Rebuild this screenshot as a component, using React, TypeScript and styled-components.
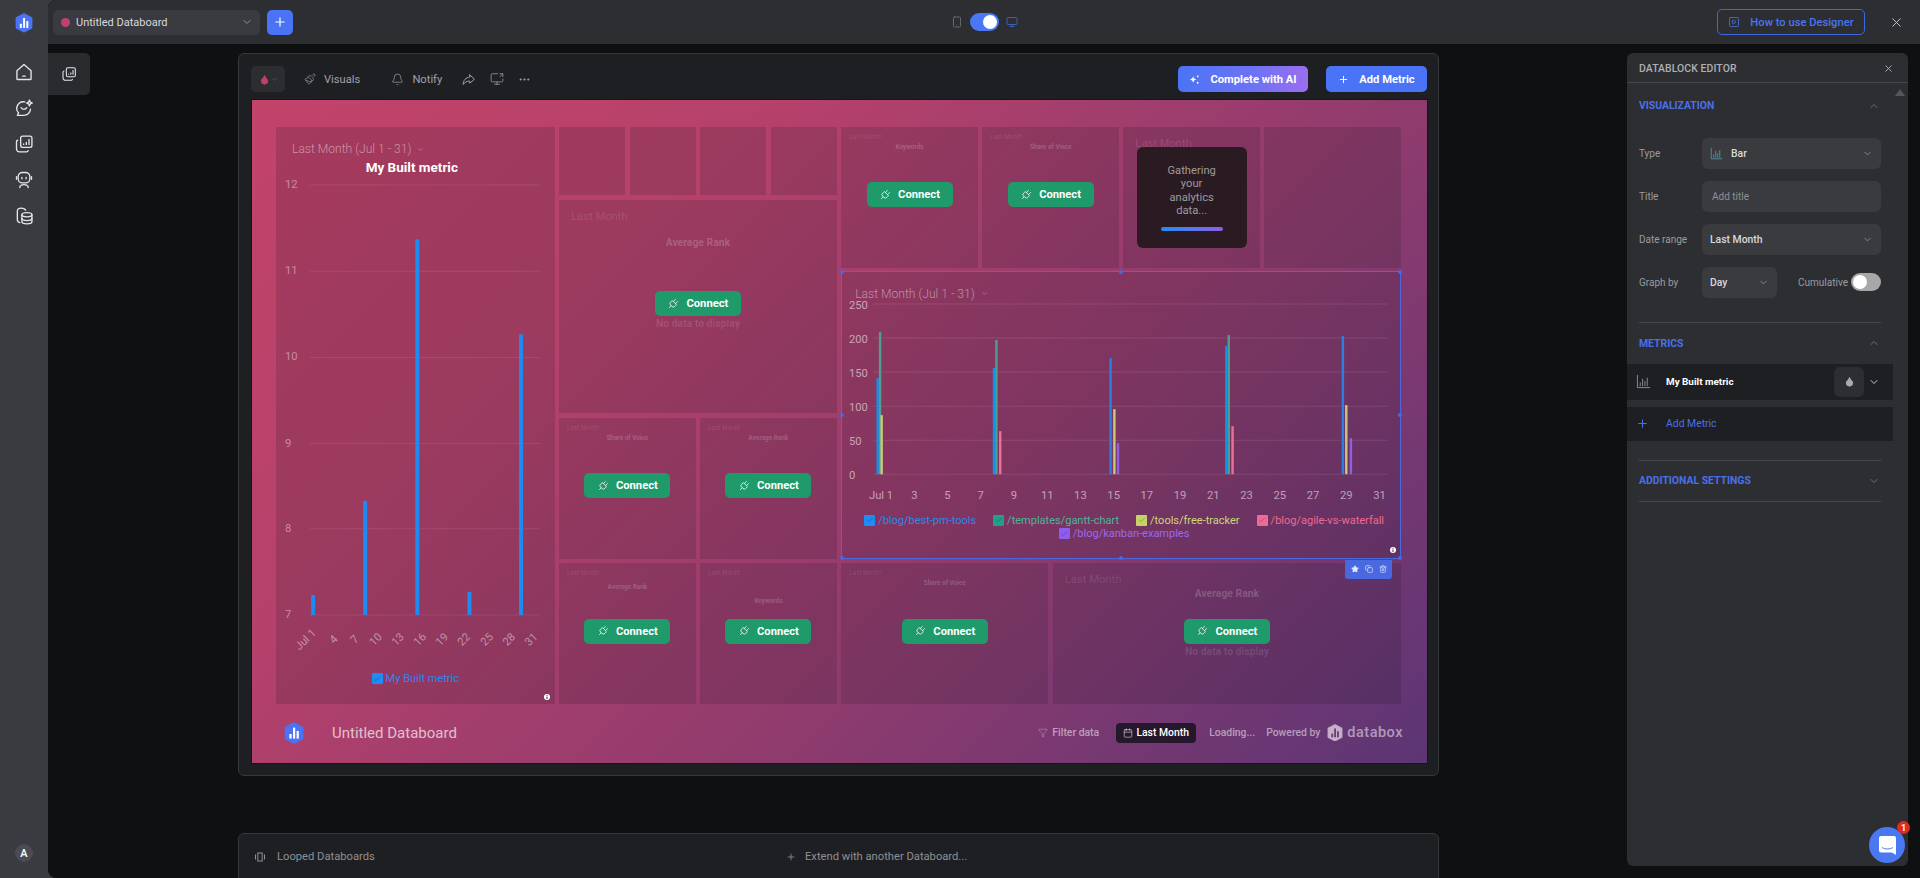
import React from 'react';
import styled, { createGlobalStyle } from 'styled-components';
import {
  Bell,
  Calendar,
  Check,
  ChevronDown,
  ChevronUp,
  Copy,
  Droplet,
  Filter,
  Monitor,
  MoreHorizontal,
  Paintbrush,
  Plug as PlugIcon,
  Plus,
  ScreenShare,
  Smartphone,
  SquarePlay,
  Star,
  Trash2,
  X,
} from 'lucide-react';

const Global = createGlobalStyle`
  html, body { margin: 0; padding: 0; height: 100%; background: #0f1012; }
  body { font-family: Roboto, "Liberation Sans", sans-serif; overflow: hidden; }
  * { box-sizing: border-box; }
`;

const Shell = styled.div`
  display: flex;
  width: 1920px;
  height: 878px;
  background: #3a3b41;
  overflow: hidden;
`;

const Nav = styled.nav`
  width: 48px;
  flex: none;
  display: flex;
  flex-direction: column;
  align-items: center;
  padding: 13px 0 16px;
`;

const NavLogo = styled.div`
  height: 22px;
  margin-bottom: 25px;
`;

const NavButton = styled.div`
  width: 24px;
  height: 24px;
  margin-bottom: 12px;
  display: flex;
  align-items: center;
  justify-content: center;
  color: #e6e6ea;
`;

const Avatar = styled.div`
  margin-top: auto;
  width: 18px;
  height: 18px;
  border-radius: 50%;
  background: #4b4c53;
  color: #fff;
  font-size: 11px;
  font-weight: 500;
  display: flex;
  align-items: center;
  justify-content: center;
`;

const Main = styled.div`
  flex: 1;
  min-width: 0;
  display: flex;
  flex-direction: column;
  background: #0f1012;
  border-radius: 8px 0 0 8px;
  overflow: hidden;
`;

const TopBar = styled.header`
  height: 44px;
  flex: none;
  display: grid;
  grid-template-columns: 1fr auto 1fr;
  align-items: center;
  padding: 0 5px;
  background: #2d2e32;
`;

const TopLeft = styled.div`
  display: flex;
  align-items: center;
  gap: 7px;
`;

const TopRight = styled.div`
  display: flex;
  align-items: center;
  justify-content: flex-end;
  gap: 24px;
  padding-right: 11px;
  color: #c9cacd;
`;

const BoardSelect = styled.div`
  width: 207px;
  height: 25px;
  display: flex;
  align-items: center;
  padding: 0 7px 0 8px;
  border-radius: 5px;
  background: #3a3b40;
  color: #d8d9dc;
  font-size: 11px;
`;

const Dot = styled.span`
  width: 9px;
  height: 9px;
  border-radius: 50%;
  background: #c0406a;
  margin-right: 6px;
`;

const PushRight = styled.span`
  margin-left: auto;
  display: flex;
  color: #8d8e92;
`;

const BlueSquare = styled.div`
  width: 26px;
  height: 25px;
  display: flex;
  align-items: center;
  justify-content: center;
  border-radius: 5px;
  background: #4a74f5;
  color: #fff;
`;

const DeviceSwitch = styled.div`
  display: flex;
  align-items: center;
  gap: 7px;
`;

const DeviceIcon = styled.span<{ $on?: boolean }>`
  display: flex;
  color: ${(p) => (p.$on ? '#3f5fb8' : '#66676b')};
`;

const Toggle = styled.div<{ $on?: boolean }>`
  width: ${(p) => (p.$on ? 29 : 30)}px;
  height: 18px;
  padding: 2px;
  border-radius: 9px;
  display: flex;
  justify-content: ${(p) => (p.$on ? 'flex-end' : 'flex-start')};
  background: ${(p) => (p.$on ? '#4a78f5' : '#a7a7a9')};
  &::after {
    content: '';
    width: 14px;
    height: 14px;
    border-radius: 50%;
    background: #fff;
  }
`;

const GuideButton = styled.div`
  width: 148px;
  height: 26px;
  display: flex;
  align-items: center;
  justify-content: center;
  gap: 10px;
  border: 1px solid #3f66e0;
  border-radius: 5px;
  color: #4a74f0;
  font-size: 11.2px;
  font-weight: 500;
`;

const Body = styled.div`
  flex: 1;
  min-height: 0;
  display: flex;
  align-items: flex-start;
`;

const SideTab = styled.div`
  width: 42px;
  height: 42px;
  margin-top: 9px;
  flex: none;
  display: flex;
  align-items: center;
  justify-content: center;
  border-radius: 0 5px 5px 0;
  background: #2a2b2e;
  color: #e6e6ea;
`;

const Stage = styled.div`
  width: 1201px;
  margin: 9px 0 0 148px;
  flex: none;
`;

const Card = styled.section`
  height: 723px;
  padding: 0 11px 12px 13px;
  display: flex;
  flex-direction: column;
  border: 1px solid #37383c;
  border-radius: 6px;
  background: #1e1f23;
`;

const Toolbar = styled.div`
  height: 46px;
  flex: none;
  display: flex;
  align-items: center;
  padding-top: 4px;
  color: #a0a1a5;
  font-size: 11.2px;
`;

const SwatchButton = styled.div`
  width: 34px;
  height: 26px;
  margin: 0 19px 0 -1px;
  display: flex;
  align-items: center;
  justify-content: center;
  gap: 1px;
  border-radius: 5px;
  background: #2c2d31;
  color: #6c6d72;
`;

const ToolItem = styled.div<{ $space: number }>`
  display: flex;
  align-items: center;
  gap: 8px;
  margin-right: ${(p) => p.$space}px;
`;

const Action = styled.div<{ $w: number; $ai?: boolean }>`
  width: ${(p) => p.$w}px;
  height: 26px;
  margin-left: ${(p) => (p.$ai ? 'auto' : '18px')};
  display: flex;
  align-items: center;
  justify-content: center;
  gap: 10px;
  border-radius: 5px;
  color: #fff;
  font-size: 11.2px;
  font-weight: 700;
  background: ${(p) => (p.$ai ? 'linear-gradient(90deg, #4a74f5 0%, #6f72f4 60%, #9a6ef0 100%)' : '#4a74f5')};
`;

const Canvas = styled.div`
  flex: 1;
  min-height: 0;
  display: flex;
  flex-direction: column;
  padding: 27px 26px 0 24px;
  box-shadow: 0 0 0 1px #15161a;
  background: linear-gradient(135deg, #c2436a 0%, #b5416b 30%, #8e3b6e 65%, #5c3575 100%);
`;

const TileGrid = styled.div`
  height: 577px;
  flex: none;
  display: grid;
  grid-template-columns: 67px repeat(15, 1fr);
  grid-template-rows: repeat(8, 1fr);
  gap: 4.5px;
`;

const Tile = styled.div<{ $col: number; $row: number; $w: number; $h: number }>`
  position: relative;
  min-width: 0;
  min-height: 0;
  grid-column: ${(p) => p.$col} / span ${(p) => p.$w};
  grid-row: ${(p) => p.$row} / span ${(p) => p.$h};
  background: rgba(32, 22, 34, 0.17);
`;

const GhostHeader = styled.div<{ $lg?: boolean }>`
  padding: ${(p) => (p.$lg ? '11px 0 0 12px' : '6px 0 0 8px')};
  font-size: ${(p) => (p.$lg ? 11.2 : 6.4)}px;
  line-height: ${(p) => (p.$lg ? 11 : 8)}px;
  color: rgba(255, 255, 255, 0.12);
`;

const GhostTitle = styled.div<{ $lg?: boolean; $gap: number }>`
  margin-top: ${(p) => p.$gap}px;
  text-align: center;
  font-size: ${(p) => (p.$lg ? 10.4 : 6.4)}px;
  line-height: ${(p) => (p.$lg ? 12 : 8)}px;
  font-weight: 700;
  color: rgba(255, 255, 255, 0.2);
`;

const TileCenter = styled.div<{ $even?: boolean }>`
  position: absolute;
  inset: 0 0 ${(p) => (p.$even ? 0 : 5)}px 0;
  display: flex;
  align-items: center;
  justify-content: center;
`;

const ConnectWrap = styled.div`
  position: relative;
`;

const ConnectButton = styled.div`
  width: 86px;
  height: 25px;
  display: flex;
  align-items: center;
  justify-content: center;
  gap: 7px;
  border-radius: 5px;
  background: #1f9a6a;
  color: #fff;
  font-size: 11.2px;
  font-weight: 700;
`;

const ConnectPlug = styled(PlugIcon)`
  transform: rotate(45deg);
`;

const NoData = styled.div`
  position: absolute;
  top: 100%;
  left: 0;
  right: 0;
  margin-top: 2px;
  text-align: center;
  white-space: nowrap;
  font-size: 10.4px;
  line-height: 12px;
  font-weight: 700;
  color: rgba(255, 255, 255, 0.13);
`;

const GatherCard = styled.div`
  width: 110px;
  height: 101px;
  padding: 17px 30px 0;
  display: flex;
  flex-direction: column;
  align-items: center;
  border-radius: 6px;
  background: #2a1a22;
  color: #9f9a9d;
  font-size: 11.2px;
  line-height: 13.4px;
  text-align: center;
`;

const GatherBar = styled.div`
  width: 62px;
  height: 4px;
  margin-top: 9px;
  flex: none;
  border-radius: 2px;
  background: linear-gradient(90deg, #1f90f5, #8f60e6);
`;

const RangeLabel = styled.div<{ $tight?: boolean }>`
  display: flex;
  align-items: center;
  gap: 6px;
  padding: ${(p) => (p.$tight ? '13px 0 0 14px' : '14px 0 0 16px')};
  height: 30px;
  font-size: 12.1px;
  line-height: 16px;
  font-weight: 300;
  color: rgba(255, 255, 255, 0.45);
`;

const ChartTitle = styled.div`
  margin-top: 1px;
  padding-right: 7px;
  text-align: center;
  font-size: 13.5px;
  line-height: 18px;
  font-weight: 700;
  color: #fff;
`;

const ChartSvg = styled.svg`
  display: block;
  width: 100%;
  overflow: visible;
  font-family: Roboto, "Liberation Sans", sans-serif;
`;

const Legend = styled.div<{ $top: number; $shift?: number }>`
  display: flex;
  flex-wrap: wrap;
  justify-content: center;
  column-gap: 17px;
  margin-top: ${(p) => p.$top}px;
  padding-left: ${(p) => p.$shift ?? 0}px;
  font-size: 11px;
  line-height: 13.5px;
`;

const LegendItem = styled.div<{ $color: string }>`
  display: flex;
  align-items: center;
  gap: 3px;
  color: ${(p) => p.$color};
`;

const LegendBox = styled.span<{ $color: string }>`
  width: 11px;
  height: 11px;
  flex: none;
  display: flex;
  align-items: center;
  justify-content: center;
  border-radius: 1px;
  background: ${(p) => p.$color};
  color: rgba(30, 30, 40, 0.55);
`;

const InfoDot = styled.svg<{ $right: number; $bottom: number }>`
  position: absolute;
  right: ${(p) => p.$right}px;
  bottom: ${(p) => p.$bottom}px;
  width: 6px;
  height: 6px;
`;

const SelectionFrame = styled.div`
  position: absolute;
  inset: -1px 0 0 0;
  border: 1px solid #4a68e0;
  pointer-events: none;
`;

const Handle = styled.span<{ $x: number; $y: number }>`
  position: absolute;
  left: ${(p) => p.$x}%;
  top: ${(p) => p.$y}%;
  width: 4px;
  height: 4px;
  margin: -2px 0 0 -2px;
  border-radius: 50%;
  background: #4a68e0;
`;

const BlockTools = styled.div`
  position: absolute;
  right: 9px;
  bottom: -20px;
  width: 47px;
  height: 19px;
  display: flex;
  align-items: center;
  justify-content: center;
  gap: 6px;
  border-radius: 0 0 3px 3px;
  background: #4a68e0;
  color: #e6e9ff;
`;

const CanvasFooter = styled.footer`
  flex: 1;
  display: flex;
  align-items: center;
  padding: 0 0 2px 8px;
`;

const FooterName = styled.div`
  margin-left: 28px;
  font-size: 15px;
  color: rgba(255, 255, 255, 0.68);
`;

const FooterRight = styled.div`
  margin-left: auto;
  margin-right: -2px;
  display: flex;
  align-items: center;
  font-size: 10.4px;
  font-weight: 500;
  color: rgba(255, 255, 255, 0.52);
`;

const FilterLink = styled.div`
  display: flex;
  align-items: center;
  gap: 4px;
  margin-right: 17px;
`;

const RangePill = styled.div`
  width: 80px;
  height: 20px;
  margin-right: 13px;
  display: flex;
  align-items: center;
  justify-content: center;
  gap: 3px;
  border-radius: 4px;
  background: #26182c;
  color: #fff;
`;

const FooterNote = styled.div<{ $space: number }>`
  margin-right: ${(p) => p.$space}px;
`;

const BrandName = styled.div`
  margin-left: 4px;
  font-size: 14.5px;
  letter-spacing: 0.5px;
  color: rgba(255, 255, 255, 0.5);
`;

const LoopBar = styled.div`
  height: 60px;
  margin-top: 57px;
  display: flex;
  align-items: flex-start;
  padding-top: 16px;
  border: 1px solid #37383c;
  border-radius: 6px 6px 0 0;
  background: #1e1f23;
  color: #8f9094;
  font-size: 11.2px;
`;

const LoopLabel = styled.div<{ $w: number; $pad: number; $gap: number }>`
  width: ${(p) => p.$w}px;
  padding-left: ${(p) => p.$pad}px;
  display: flex;
  align-items: center;
  gap: ${(p) => p.$gap}px;
`;

const Panel = styled.aside`
  width: 281px;
  height: 813px;
  margin: 9px 12px 0 auto;
  flex: none;
  position: relative;
  border-radius: 6px;
  background: #2d2e32;
  color: #9a9ca0;
  font-size: 10px;
`;

const PanelHead = styled.div`
  height: 30px;
  display: flex;
  align-items: center;
  justify-content: space-between;
  padding: 1px 14px 0 12px;
  border-bottom: 1px solid #46474b;
  color: #aeb0b4;
  font-size: 10.4px;
  font-weight: 500;
  letter-spacing: 0.1px;
`;

const ScrollArrow = styled.span`
  position: absolute;
  top: 36px;
  right: 3px;
  width: 0;
  height: 0;
  border-left: 5px solid transparent;
  border-right: 5px solid transparent;
  border-bottom: 7px solid #55565a;
`;

const Section = styled.div`
  margin: 0 27px 0 12px;
`;

const SectionHead = styled.div<{ $h: number }>`
  height: ${(p) => p.$h}px;
  display: flex;
  align-items: center;
  justify-content: space-between;
  padding-right: 1px;
  color: #4a70e8;
  font-size: 10.4px;
  font-weight: 700;
  svg {
    color: #6d6e73;
  }
`;

const Divider = styled.div<{ $top?: number }>`
  height: 1px;
  margin-top: ${(p) => p.$top ?? 0}px;
  background: #46474b;
`;

const FormRows = styled.div`
  display: flex;
  flex-direction: column;
  gap: 12.5px;
  margin: 10px 0 24px;
`;

const FormRow = styled.div`
  display: flex;
  align-items: center;
`;

const FormLabel = styled.div`
  width: 63px;
  flex: none;
`;

const Field = styled.div<{ $w?: number; $dim?: boolean }>`
  width: ${(p) => p.$w ?? 179}px;
  height: 30.5px;
  display: flex;
  align-items: center;
  gap: 8px;
  padding: 0 8px 0 ${(p) => (p.$dim ? 10 : 8)}px;
  border-radius: 6px;
  background: #3a3b3f;
  font-size: ${(p) => (p.$dim ? 10 : 10.4)}px;
  color: ${(p) => (p.$dim ? '#8f9094' : '#d8d9dc')};
  font-weight: ${(p) => (p.$dim ? 400 : 500)};
`;

const Cumulative = styled.div`
  margin-left: auto;
  display: flex;
  align-items: center;
  gap: 3px;
`;

const MetricRow = styled.div<{ $add?: boolean }>`
  width: 266px;
  height: ${(p) => (p.$add ? 34 : 36)}px;
  margin-top: ${(p) => (p.$add ? 7 : 0)}px;
  display: flex;
  align-items: center;
  padding-left: 9px;
  background: #1e1f23;
  color: ${(p) => (p.$add ? '#4a70e8' : '#fff')};
  font-weight: ${(p) => (p.$add ? 400 : 700)};
  font-size: ${(p) => (p.$add ? 10.4 : 9.9)}px;
`;

const MetricIcon = styled.span<{ $add?: boolean }>`
  width: 30px;
  flex: none;
  display: flex;
  color: ${(p) => (p.$add ? '#4a70e8' : '#8e8f93')};
`;

const MetricDrop = styled.div`
  width: 30px;
  height: 30px;
  margin-left: auto;
  display: flex;
  align-items: center;
  justify-content: center;
  border-radius: 6px;
  background: #2d2e32;
  color: #a9aaae;
`;

const MetricChevron = styled.span`
  width: 20px;
  margin-right: 9px;
  display: flex;
  justify-content: center;
  color: #c9cacd;
`;

const ChatBubble = styled.div`
  position: absolute;
  right: 3px;
  bottom: 3px;
  width: 36px;
  height: 36px;
  display: flex;
  align-items: center;
  justify-content: center;
  border-radius: 50%;
  background: #4a78f0;
`;

const ChatBadge = styled.span`
  position: absolute;
  top: -6px;
  right: -5px;
  width: 13px;
  height: 13px;
  display: flex;
  align-items: center;
  justify-content: center;
  border-radius: 50%;
  background: #e02b20;
  color: #fff;
  font-size: 9px;
  font-weight: 700;
`;

const Logo = ({ w, fill, bar }: { w: number; fill: string; bar: string }) => (
  <svg width={w} height={w * 1.1} viewBox="0 0 20 22">
    <path d="M10 1 18.5 5.5V16.5L10 21 1.5 16.5V5.5Z" fill={fill} stroke={fill} strokeWidth="1.6" strokeLinejoin="round" />
    <rect x="5.4" y="12" width="2.2" height="4.6" fill={bar} />
    <rect x="9" y="5.6" width="2.2" height="11" fill={bar} />
    <rect x="12.6" y="9" width="2.2" height="7.6" fill={bar} />
  </svg>
);

const Stroke = ({ size = 20, children }: { size?: number; children: React.ReactNode }) => (
  <svg width={size} height={size} viewBox="0 0 24 24" fill="none" stroke="currentColor" strokeWidth="1.6" strokeLinecap="round" strokeLinejoin="round">
    {children}
  </svg>
);

const BoardsGlyph = ({ size }: { size?: number }) => (
  <Stroke size={size}>
    <rect x="8" y="2.5" width="13.5" height="13.5" rx="2.2" />
    <path d="M4.5 7.5A2 2 0 0 0 3 9.5V18a3.5 3.5 0 0 0 3.5 3.5H15a2 2 0 0 0 2-1.5" />
    <path d="M11.5 12.5V12M14.8 12.5V10M18 12.5V6.5" />
  </Stroke>
);

const BarsGlyph = ({ size, color }: { size: number; color: string }) => (
  <svg width={size} height={size} viewBox="0 0 16 16" fill="none" stroke={color} strokeWidth="1" strokeLinecap="square">
    <path d="M1.5 1.5v13h13" />
    <path d="M4.5 12.5v-3M7 12.5v-7M9.5 12.5V8M12 12.5v-8" />
  </svg>
);

const HomeGlyph = () => (
  <Stroke>
    <path d="M3.5 10.5 12 3l8.5 7.5V20a1 1 0 0 1-1 1h-15a1 1 0 0 1-1-1Z" />
    <path d="M10.5 17h3" />
  </Stroke>
);

const ChatGlyph = () => (
  <Stroke>
    <path d="M13 4.7A8 8 0 0 0 5.5 18L4 20.8h7.5a8 8 0 0 0 8.3-7.3" />
    <path d="M8.5 11.5c1.2 2.8 5.3 2.8 6.8 0" />
    <path d="M18.5 2.5l1 2.5 2.5 1-2.5 1-1 2.5-1-2.5-2.5-1 2.5-1Z" />
  </Stroke>
);

const RobotGlyph = () => (
  <Stroke>
    <rect x="5" y="3" width="14" height="12.5" rx="5" />
    <path d="M3 8v3M21 8v3M9.5 9v1.5M14.5 9v1.5" />
    <path d="M7 21c0-2.5 2-3.5 5-3.5s5 1 5 3.5" />
  </Stroke>
);

const StackGlyph = () => (
  <Stroke>
    <ellipse cx="15.5" cy="10.5" rx="6" ry="2.5" />
    <path d="M9.5 10.5V19c0 1.4 2.7 2.5 6 2.5s6-1.1 6-2.5v-8.5" />
    <path d="M9.5 15c0 1.4 2.7 2.5 6 2.5s6-1.1 6-2.5" />
    <path d="M14 5c-.5-1.5-3-2.5-5.5-2.5S4 3.5 4 6v10.5c0 1.5 1 3 3 3.5" />
  </Stroke>
);

const ShareGlyph = () => (
  <Stroke size={15}>
    <path d="M14 4.5l7.5 7-7.5 6.5v-3.5c-4.5 0-8 1.5-10.5 5.5 0-7 4-11 10.5-12Z" />
  </Stroke>
);

const Info = ({ right, bottom }: { right: number; bottom: number }) => (
  <InfoDot $right={right} $bottom={bottom} viewBox="0 0 6 6">
    <circle cx="3" cy="3" r="3" fill="#fff" />
    <rect x="2.5" y="1" width="1" height="0.9" fill="#3b2a3f" />
    <rect x="2.5" y="2.5" width="1" height="2.5" fill="#3b2a3f" />
  </InfoDot>
);

type Ghost = {
  col: number;
  row: number;
  w: number;
  h: number;
  title?: string;
  gap?: number;
  lg?: boolean;
  noData?: boolean;
};

const ghosts: Ghost[] = [
  { col: 5, row: 1, w: 1, h: 1 },
  { col: 6, row: 1, w: 1, h: 1 },
  { col: 7, row: 1, w: 1, h: 1 },
  { col: 8, row: 1, w: 1, h: 1 },
  { col: 5, row: 2, w: 4, h: 3, title: 'Average Rank', gap: 15, lg: true, noData: true },
  { col: 5, row: 5, w: 2, h: 2, title: 'Share of Voice', gap: 2 },
  { col: 7, row: 5, w: 2, h: 2, title: 'Average Rank', gap: 2 },
  { col: 5, row: 7, w: 2, h: 2, title: 'Average Rank', gap: 6 },
  { col: 7, row: 7, w: 2, h: 2, title: 'Keywords', gap: 20 },
  { col: 9, row: 1, w: 2, h: 2, title: 'Keywords', gap: 2 },
  { col: 11, row: 1, w: 2, h: 2, title: 'Share of Voice', gap: 2 },
  { col: 9, row: 7, w: 3, h: 2, title: 'Share of Voice', gap: 2 },
  { col: 12, row: 7, w: 5, h: 2, title: 'Average Rank', gap: 3, lg: true, noData: true },
];

const builtBars = [
  { x: 313, top: 594 },
  { x: 365, top: 500 },
  { x: 417, top: 239 },
  { x: 469, top: 591 },
  { x: 520.5, top: 334 },
];

const builtTicks = [
  ['Jul 1', 306],
  ['4', 334],
  ['7', 355],
  ['10', 376],
  ['13', 398],
  ['16', 420],
  ['19', 442],
  ['22', 464],
  ['25', 487],
  ['28', 509],
  ['31', 531],
] as const;

const BLUE = '#1d8bf0';
const GREEN = '#4f9f8c';
const YELLOW = '#c9c87a';
const PINK = '#e8709a';
const PURPLE = '#9160e0';

const pageBars = [
  { x: 876.4, top: 378, color: '#0e93ee' },
  { x: 878.8, top: 332, color: GREEN },
  { x: 880.4, top: 415, color: YELLOW },
  { x: 992.6, top: 368, color: '#0e93ee' },
  { x: 995, top: 340, color: GREEN },
  { x: 998.8, top: 431, color: PINK },
  { x: 1109, top: 358, color: '#2a7fe0' },
  { x: 1112.8, top: 409, color: YELLOW },
  { x: 1116.4, top: 443, color: PURPLE },
  { x: 1224.6, top: 346, color: '#0e93ee' },
  { x: 1227, top: 335, color: GREEN },
  { x: 1230.8, top: 426, color: PINK },
  { x: 1341, top: 336, color: '#2a7fe0' },
  { x: 1344.4, top: 405, color: YELLOW },
  { x: 1349, top: 438, color: PURPLE },
];

const pageTicks = ['Jul 1', '3', '5', '7', '9', '11', '13', '15', '17', '19', '21', '23', '25', '27', '29', '31'];

const pageLegend = [
  ['/blog/best-pm-tools', '#1f8cf5', '#2f86ee'],
  ['/templates/gantt-chart', '#1fa08a', '#4fb39c'],
  ['/tools/free-tracker', '#c5d265', '#cfd67c'],
  ['/blog/agile-vs-waterfall', '#ec6c94', '#ee6a90'],
  ['/blog/kanban-examples', '#8f5cf0', '#9a6af0'],
];

const handles = [
  [0, 0],
  [50, 0],
  [100, 0],
  [0, 50],
  [100, 50],
  [0, 100],
  [50, 100],
  [100, 100],
];

const ConnectBlock = ({ noData }: { noData?: boolean }) => (
  <TileCenter>
    <ConnectWrap>
      {noData && <NoData>No data to display</NoData>}
      <ConnectButton>
        <ConnectPlug size={12} strokeWidth={1.5} />
        Connect
      </ConnectButton>
    </ConnectWrap>
  </TileCenter>
);

const BuiltMetricTile = () => (
  <Tile $col={1} $row={1} $w={4} $h={8}>
    <RangeLabel>
      Last Month (Jul 1 - 31)
      <ChevronDown size={7} />
    </RangeLabel>
    <ChartTitle>My Built metric</ChartTitle>
    <ChartSvg viewBox="276 176 278 490">
      {[185, 271, 357, 443, 528, 614].map((y, i) => (
        <g key={y}>
          <line x1="310" x2="539" y1={y} y2={y} stroke="rgba(255,255,255,0.09)" />
          <text x="285" y={y + 3} fontSize="11.2" fill="rgba(255,255,255,0.42)">
            {12 - i}
          </text>
        </g>
      ))}
      {builtBars.map((b) => (
        <rect key={b.x} x={b.x - 2} y={b.top} width="4" height={614 - b.top} rx="1" fill={BLUE} />
      ))}
      {builtTicks.map(([t, x]) => (
        <text
          key={t}
          x={x}
          y={642}
          fontSize="11.2"
          textAnchor="middle"
          fill="rgba(255,255,255,0.45)"
          transform={`rotate(-45 ${x} 639)`}
        >
          {t}
        </text>
      ))}
    </ChartSvg>
    <Legend $top={5}>
      <LegendItem $color="#2f86ee">
        <LegendBox $color="#1f8cf5">
          <Check size={8} strokeWidth={1.5} />
        </LegendBox>
        My Built metric
      </LegendItem>
    </Legend>
    <Info right={5} bottom={4} />
  </Tile>
);

const PageChartTile = () => (
  <Tile $col={9} $row={3} $w={8} $h={4}>
    <RangeLabel $tight>
      Last Month (Jul 1 - 31)
      <ChevronDown size={7} />
    </RangeLabel>
    <ChartSvg viewBox="841 302 559 204">
      {[304, 338, 372, 406, 440, 474].map((y, i) => (
        <g key={y}>
          <line x1="873" x2="1387" y1={y} y2={y} stroke="rgba(255,255,255,0.1)" />
          <text x="849" y={y + 5} fontSize="11.2" fill="rgba(255,255,255,0.55)">
            {250 - i * 50}
          </text>
        </g>
      ))}
      {pageBars.map((b) => (
        <rect key={b.x} x={b.x} y={b.top} width="2.4" height={474 - b.top} fill={b.color} />
      ))}
      {pageTicks.map((t, i) => (
        <text key={t} x={881 + i * 33.18} y="499" fontSize="11.2" textAnchor="middle" fill="rgba(255,255,255,0.55)">
          {t}
        </text>
      ))}
    </ChartSvg>
    <Legend $top={7} $shift={6}>
      {pageLegend.map(([label, box, text]) => (
        <LegendItem key={label} $color={text}>
          <LegendBox $color={box}>
            <Check size={8} strokeWidth={1.5} />
          </LegendBox>
          {label}
        </LegendItem>
      ))}
    </Legend>
    <Info right={5} bottom={6} />
    <SelectionFrame>
      {handles.map(([x, y]) => (
        <Handle key={`${x}-${y}`} $x={x} $y={y} />
      ))}
    </SelectionFrame>
    <BlockTools>
      <Star size={8} fill="currentColor" />
      <Copy size={8} />
      <Trash2 size={8} />
    </BlockTools>
  </Tile>
);

const App = () => (
  <Shell>
    <Global />
    <Nav>
      <NavLogo>
        <Logo w={18} fill="#4a74f5" bar="#fff" />
      </NavLogo>
      <NavButton>
        <HomeGlyph />
      </NavButton>
      <NavButton>
        <ChatGlyph />
      </NavButton>
      <NavButton>
        <BoardsGlyph />
      </NavButton>
      <NavButton>
        <RobotGlyph />
      </NavButton>
      <NavButton>
        <StackGlyph />
      </NavButton>
      <Avatar>A</Avatar>
    </Nav>
    <Main>
      <TopBar>
        <TopLeft>
          <BoardSelect>
            <Dot />
            Untitled Databoard
            <PushRight>
              <ChevronDown size={12} />
            </PushRight>
          </BoardSelect>
          <BlueSquare>
            <Plus size={14} />
          </BlueSquare>
        </TopLeft>
        <DeviceSwitch>
          <DeviceIcon>
            <Smartphone size={12} />
          </DeviceIcon>
          <Toggle $on />
          <DeviceIcon $on>
            <Monitor size={12} />
          </DeviceIcon>
        </DeviceSwitch>
        <TopRight>
          <GuideButton>
            <SquarePlay size={12} strokeWidth={1.5} />
            How to use Designer
          </GuideButton>
          <X size={15} strokeWidth={1.5} />
        </TopRight>
      </TopBar>
      <Body>
        <SideTab>
          <BoardsGlyph size={16} />
        </SideTab>
        <Stage>
          <Card>
            <Toolbar>
              <SwatchButton>
                <Droplet size={11} fill="#c0406a" color="#c0406a" />
                <ChevronDown size={7} />
              </SwatchButton>
              <ToolItem $space={31}>
                <Paintbrush size={12} strokeWidth={1.3} />
                Visuals
              </ToolItem>
              <ToolItem $space={19}>
                <Bell size={13} strokeWidth={1.3} />
                Notify
              </ToolItem>
              <ToolItem $space={14}>
                <ShareGlyph />
              </ToolItem>
              <ToolItem $space={14}>
                <ScreenShare size={14} strokeWidth={1.3} />
              </ToolItem>
              <ToolItem $space={0}>
                <MoreHorizontal size={13} />
              </ToolItem>
              <Action $w={130} $ai>
                <svg width="11" height="11" viewBox="0 0 12 12" fill="#fff">
                  <path d="M4.5 2.5l1 2.5 2.5 1-2.5 1-1 2.5-1-2.5L1 6l2.5-1Z" />
                  <circle cx="9.5" cy="2.5" r="1" />
                  <circle cx="9.5" cy="9.5" r="1" />
                </svg>
                Complete with AI
              </Action>
              <Action $w={101}>
                <Plus size={11} />
                Add Metric
              </Action>
            </Toolbar>
            <Canvas>
              <TileGrid>
                <BuiltMetricTile />
                {ghosts.map((g) => (
                  <Tile key={`${g.col}-${g.row}`} $col={g.col} $row={g.row} $w={g.w} $h={g.h}>
                    {g.title && (
                      <>
                        <GhostHeader $lg={g.lg}>Last Month</GhostHeader>
                        <GhostTitle $lg={g.lg} $gap={g.gap ?? 0}>
                          {g.title}
                        </GhostTitle>
                        <ConnectBlock noData={g.noData} />
                      </>
                    )}
                  </Tile>
                ))}
                <Tile $col={13} $row={1} $w={2} $h={2}>
                  <GhostHeader $lg>Last Month</GhostHeader>
                  <TileCenter $even>
                    <GatherCard>
                      Gathering your analytics data...
                      <GatherBar />
                    </GatherCard>
                  </TileCenter>
                </Tile>
                <Tile $col={15} $row={1} $w={2} $h={2} />
                <PageChartTile />
              </TileGrid>
              <CanvasFooter>
                <Logo w={20} fill="#4a74f5" bar="#fff" />
                <FooterName>Untitled Databoard</FooterName>
                <FooterRight>
                  <FilterLink>
                    <Filter size={10} strokeWidth={1.2} />
                    Filter data
                  </FilterLink>
                  <RangePill>
                    <Calendar size={10} strokeWidth={1.2} />
                    Last Month
                  </RangePill>
                  <FooterNote $space={11}>Loading...</FooterNote>
                  <FooterNote $space={7}>Powered by</FooterNote>
                  <Logo w={16} fill="#c7aec9" bar="#6a3a70" />
                  <BrandName>databox</BrandName>
                </FooterRight>
              </CanvasFooter>
            </Canvas>
          </Card>
          <LoopBar>
            <LoopLabel $w={547} $pad={16} $gap={12}>
              <svg width="10" height="10" viewBox="0 0 10 10" fill="none" stroke="currentColor">
                <rect x="2.8" y="1" width="4.4" height="8" />
                <path d="M.5 2.5v5M9.5 2.5v5" />
              </svg>
              Looped Databoards
            </LoopLabel>
            <LoopLabel $w={400} $pad={0} $gap={9}>
              <Plus size={10} />
              Extend with another Databoard...
            </LoopLabel>
          </LoopBar>
        </Stage>
        <Panel>
          <PanelHead>
            DATABLOCK EDITOR
            <X size={11} />
          </PanelHead>
          <ScrollArrow />
          <Section>
            <SectionHead $h={45}>
              VISUALIZATION
              <ChevronUp size={12} />
            </SectionHead>
            <FormRows>
              <FormRow>
                <FormLabel>Type</FormLabel>
                <Field>
                  <BarsGlyph size={13} color="#4f9fb0" />
                  Bar
                  <PushRight>
                    <ChevronDown size={11} />
                  </PushRight>
                </Field>
              </FormRow>
              <FormRow>
                <FormLabel>Title</FormLabel>
                <Field $dim>Add title</Field>
              </FormRow>
              <FormRow>
                <FormLabel>Date range</FormLabel>
                <Field>
                  Last Month
                  <PushRight>
                    <ChevronDown size={11} />
                  </PushRight>
                </Field>
              </FormRow>
              <FormRow>
                <FormLabel>Graph by</FormLabel>
                <Field $w={75}>
                  Day
                  <PushRight>
                    <ChevronDown size={11} />
                  </PushRight>
                </Field>
                <Cumulative>
                  Cumulative
                  <Toggle />
                </Cumulative>
              </FormRow>
            </FormRows>
            <Divider />
            <SectionHead $h={41}>
              METRICS
              <ChevronUp size={12} />
            </SectionHead>
          </Section>
          <MetricRow>
            <MetricIcon>
              <BarsGlyph size={15} color="#8e8f93" />
            </MetricIcon>
            My Built metric
            <MetricDrop>
              <Droplet size={11} fill="currentColor" />
            </MetricDrop>
            <MetricChevron>
              <ChevronDown size={12} />
            </MetricChevron>
          </MetricRow>
          <MetricRow $add>
            <MetricIcon $add>
              <Plus size={13} />
            </MetricIcon>
            Add Metric
          </MetricRow>
          <Section>
            <Divider $top={19} />
            <SectionHead $h={40}>
              ADDITIONAL SETTINGS
              <ChevronDown size={12} />
            </SectionHead>
            <Divider />
          </Section>
          <ChatBubble>
            <svg width="17" height="19" viewBox="0 0 17 19">
              <path d="M2 0h13a2 2 0 0 1 2 2v17l-4-2.5H2a2 2 0 0 1-2-2V2a2 2 0 0 1 2-2Z" fill="#fff" />
              <path d="M3 11.5c3 2 8 2 11 0" stroke="#4a78f0" strokeWidth="1" fill="none" />
            </svg>
            <ChatBadge>1</ChatBadge>
          </ChatBubble>
        </Panel>
      </Body>
    </Main>
  </Shell>
);

export default App;
